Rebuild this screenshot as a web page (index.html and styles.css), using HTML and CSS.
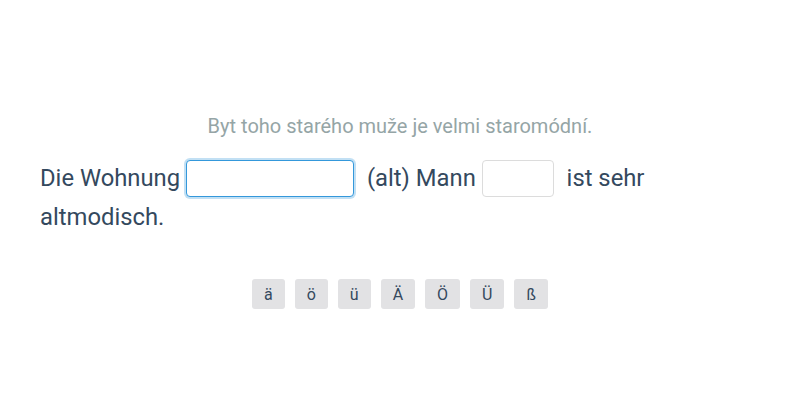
FILE: index.html
```html
<!DOCTYPE html>
<html lang="de">
<head>
    <meta charset="UTF-8">
    <meta name="viewport" content="width=device-width, initial-scale=1.0">
    <title>Lückentext</title>
    <link rel="stylesheet" href="styles.css">
</head>
<body>
    <div class="exercise">
        <p class="translation">Byt toho starého muže je velmi staromódní.</p>

        <p class="sentence">
            <span>Die Wohnung</span> <input type="text" class="gap gap-wide focused"> <span>(alt) Mann</span> <input type="text" class="gap gap-short"> <span>ist sehr altmodisch.</span>
        </p>

        <!-- special characters -->
        <div class="chars">
            <button class="char">ä</button>
            <button class="char">ö</button>
            <button class="char">ü</button>
            <button class="char">Ä</button>
            <button class="char">Ö</button>
            <button class="char">Ü</button>
            <button class="char">ß</button>
        </div>
    </div>
</body>
</html>
```

FILE: styles.css
```css
* {
    margin: 0;
    padding: 0;
    box-sizing: border-box;
}

body {
    background-color: #fff;
    color: #34495e;
    font-family: Roboto, "Liberation Sans", sans-serif;
    width: 800px;
    height: 400px;
    overflow: hidden;
}

.exercise {
    padding: 114px 40px 0;
}

.translation {
    text-align: center;
    color: #95a5a6;
    font-size: 20px;
    line-height: 24px;
    margin-bottom: 21px;
}

.sentence {
    font-size: 23.8px;
    line-height: 39px;
}

.gap {
    height: 37px;
    border: 1px solid #dcdcdc;
    border-radius: 4px;
    font-family: inherit;
    font-size: 20px;
    color: #34495e;
    padding: 0 8px;
    vertical-align: middle;
    outline: none;
    margin: -2px 7px 0 0;
}

.gap-wide {
    width: 168px;
}

.gap-short {
    width: 72px;
}

.focused {
    border-color: #3498db;
    box-shadow: 0 0 0 2px rgba(52, 152, 219, 0.3);
}

.chars {
    display: flex;
    justify-content: center;
    gap: 10px;
    margin-top: 42px;
}

.char {
    height: 30px;
    padding: 0 12px;
    border: none;
    border-radius: 3px;
    background-color: #e2e2e4;
    color: #34495e;
    font-family: inherit;
    font-size: 16px;
    cursor: pointer;
}

.char:hover {
    background-color: #d5d5d8;
}
```
